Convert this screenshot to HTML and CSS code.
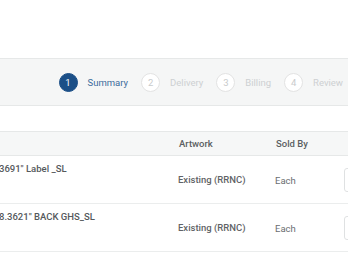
FILE: index.html
```html
<!DOCTYPE html>
<html>
<head>
<meta charset="utf-8">
<link rel="stylesheet" href="styles.css">
</head>
<body>
<div class="top"></div>
<div class="stepper">
  <div class="step active"><span class="num">1</span><span class="label">Summary</span></div>
  <div class="step"><span class="num">2</span><span class="label">Delivery</span></div>
  <div class="step"><span class="num">3</span><span class="label">Billing</span></div>
  <div class="step"><span class="num">4</span><span class="label">Review</span></div>
</div>
<div class="table">
  <div class="row head">
    <div class="c1"></div>
    <div class="c2">Artwork</div>
    <div class="c3">Sold By</div>
    <div class="c4"></div>
  </div>
  <div class="row">
    <div class="c1 name">3691" Label _SL</div>
    <div class="c2 art">Existing (RRNC)</div>
    <div class="c3 each">Each</div>
    <div class="c4"><div class="input"></div></div>
  </div>
  <div class="row">
    <div class="c1 name">8.3621" BACK GHS_SL</div>
    <div class="c2 art">Existing (RRNC)</div>
    <div class="c3 each">Each</div>
    <div class="c4"><div class="input"></div></div>
  </div>
</div>
</body>
</html>
```
FILE: styles.css
```css
html, body {
  margin: 0;
  padding: 0;
  background: #ffffff;
  font-family: Roboto, "Liberation Sans", sans-serif;
  overflow: hidden;
}
.top {
  height: 58px;
}
.stepper {
  height: 46px;
  background: #f5f6f6;
  border-top: 1px solid #e6e8e8;
  border-bottom: 1px solid #e6e8e8;
  display: flex;
  align-items: center;
  justify-content: flex-end;
  padding-right: 5px;
  gap: 13px;
}
.step {
  display: flex;
  align-items: center;
  gap: 10px;
}
.num {
  width: 17px;
  height: 17px;
  border-radius: 50%;
  border: 1px solid #e3e3e3;
  background: #ffffff;
  color: #c9cbcc;
  font-size: 9.5px;
  display: flex;
  align-items: center;
  justify-content: center;
}
.label {
  font-size: 9.5px;
  color: #cdd0d2;
}
.step.active .num {
  background: #1b4f87;
  border-color: #1b4f87;
  color: #ffffff;
}
.step.active .label {
  color: #3d6c9c;
}
.table {
  margin-top: 25px;
  overflow: hidden;
}
.row {
  display: flex;
  height: 47px;
  border-bottom: 1px solid #ebeded;
}
.row.head {
  height: 23px;
  background: #f6f7f7;
  border-top: 1px solid #e6e8e8;
  border-bottom: 1px solid #e6e8e8;
  align-items: center;
  font-size: 9.5px;
  font-weight: 500;
  color: #5b5f62;
}
.c1 { width: 179px; flex: none; }
.c2 { width: 97px; flex: none; }
.c3 { width: 69px; flex: none; }
.c4 { flex: 1; min-width: 0; }
.name {
  font-size: 9.5px;
  font-weight: 500;
  color: #55595c;
  padding-top: 7px;
  white-space: nowrap;
  margin-left: -1px;
}
.art {
  font-size: 9.5px;
  font-weight: 500;
  color: #5f6366;
  align-self: center;
}
.each {
  font-size: 9.5px;
  color: #6a6e71;
  align-self: center;
  padding-top: 1px;
}
.c4 {
  display: flex;
  align-items: center;
  overflow: hidden;
}
.input {
  flex: none;
  width: 20px;
  height: 22px;
  border: 1px solid #dfe1e2;
  border-radius: 3px;
  background: #fff;
}
```
